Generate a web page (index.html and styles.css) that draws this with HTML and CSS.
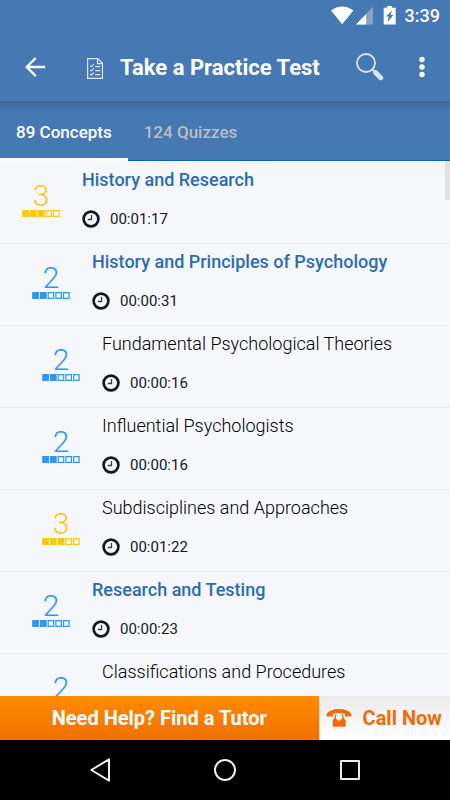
FILE: index.html
```html
<!DOCTYPE html>
<html lang="en">
<head>
<meta charset="utf-8">
<meta name="viewport" content="width=device-width, initial-scale=1">
<title>Take a Practice Test</title>
<link rel="stylesheet" href="styles.css">
</head>
<body>
<svg class="defs" aria-hidden="true">
  <symbol id="clock" viewBox="0 0 18 18">
    <circle cx="9" cy="9" r="7.4" fill="none" stroke="#15171c" stroke-width="2.7"/>
    <path d="M9.500 5V9.500H5.800" fill="none" stroke="#3a3c42" stroke-width="1.3"/>
  </symbol>
  <symbol id="bar3" viewBox="0 0 38 7">
    <path d="M.2 0h6.800v7H.2zM7.900 0h6.800v7H7.900zM15.600 0h6.800v7h-6.800z" fill="currentColor"/>
    <path d="M23.900.6h5.500v5.800h-5.500zM31.600.6h5.500v5.800h-5.500z" fill="none" stroke="currentColor" stroke-width="1.2"/>
  </symbol>
  <symbol id="bar2" viewBox="0 0 38 7">
    <path d="M.2 0h6.800v7H.2zM7.900 0h6.800v7H7.900z" fill="currentColor"/>
    <path d="M16.200.6h5.500v5.800h-5.500zM23.900.6h5.500v5.800h-5.500zM31.600.6h5.500v5.800h-5.500z" fill="none" stroke="currentColor" stroke-width="1.2"/>
  </symbol>
</svg>
<div class="screen">
  <div class="status">
    <svg width="66" height="20" viewBox="0 0 66 20" aria-hidden="true">
      <path d="M0 4.600Q11.300-3.600 22.400 4.600L11.200 18.300z" fill="#fff"/>
      <path d="M42 .8V18.500H25z" fill="#84a4cf"/>
      <path d="M35.200 8V18.500H25z" fill="#fff"/>
      <path d="M56 0h5v1.700h3.700V18.500H52.700V1.700H56z" fill="#fff"/>
      <path d="M61 4.500L55 10.500h2.700l-1.200 5.500 6-7h-2.900z" fill="#4678b3"/>
    </svg>
    <span class="time">3:39</span>
  </div>
  <header class="appbar">
    <button class="icon-button" aria-label="Back">
      <svg width="20" height="20" viewBox="0 0 20 20"><path d="M10.700 1L1.700 10l9 9M2 10h18" fill="none" stroke="#fff" stroke-width="2.400"/></svg>
    </button>
    <svg class="doc" width="16" height="21" viewBox="0 0 16 21" fill="none" stroke="#dfe7f1" aria-hidden="true">
      <path d="M.6.700h10.200l4.600 4.600v15H.6zM10.500.700v4.900h4.900" stroke-width="1.200"/>
      <path d="M3.200 7.600l1.200 1.200 2.400-2.600M3.200 11.800l1.200 1.200 2.400-2.600M3.200 16l1.200 1.200 2.400-2.600M8.200 8.600H13M8.200 12.600H13M8.200 16.600H13" stroke-width="1.100"/>
    </svg>
    <h1>Take a Practice Test</h1>
    <button class="icon-button" aria-label="Search">
      <svg width="28" height="28" viewBox="0 0 28 28"><circle cx="10" cy="10" r="9" fill="none" stroke="#dde5f1" stroke-width="1.800"/><path d="M16 16l3 3" stroke="#dde5f1" stroke-width="1.800"/><path d="M19.700 19.700l5 5" stroke="#dde5f1" stroke-width="5" stroke-linecap="round"/></svg>
    </button>
    <button class="icon-button more" aria-label="More options">
      <svg width="6" height="22" viewBox="0 0 6 22" fill="#fff"><circle cx="3" cy="3.500" r="2.700"/><circle cx="3" cy="11" r="2.700"/><circle cx="3" cy="18.500" r="2.700"/></svg>
    </button>
  </header>
  <nav class="tabs">
    <button class="tab active">89 Concepts</button>
    <button class="tab">124 Quizzes</button>
  </nav>
  <main class="list">
    <article class="row level1 gold">
      <div class="rating"><span>3</span><svg width="38" height="7"><use href="#bar3"/></svg></div>
      <div class="info"><h2>History and Research</h2><p><svg width="18" height="18"><use href="#clock"/></svg>00:01:17</p></div>
    </article>
    <article class="row level2">
      <div class="rating"><span>2</span><svg width="38" height="7"><use href="#bar2"/></svg></div>
      <div class="info"><h2>History and Principles of Psychology</h2><p><svg width="18" height="18"><use href="#clock"/></svg>00:00:31</p></div>
    </article>
    <article class="row level3">
      <div class="rating"><span>2</span><svg width="38" height="7"><use href="#bar2"/></svg></div>
      <div class="info"><h2>Fundamental Psychological Theories</h2><p><svg width="18" height="18"><use href="#clock"/></svg>00:00:16</p></div>
    </article>
    <article class="row level3">
      <div class="rating"><span>2</span><svg width="38" height="7"><use href="#bar2"/></svg></div>
      <div class="info"><h2>Influential Psychologists</h2><p><svg width="18" height="18"><use href="#clock"/></svg>00:00:16</p></div>
    </article>
    <article class="row level3 gold">
      <div class="rating"><span>3</span><svg width="38" height="7"><use href="#bar3"/></svg></div>
      <div class="info"><h2>Subdisciplines and Approaches</h2><p><svg width="18" height="18"><use href="#clock"/></svg>00:01:22</p></div>
    </article>
    <article class="row level2">
      <div class="rating"><span>2</span><svg width="38" height="7"><use href="#bar2"/></svg></div>
      <div class="info"><h2>Research and Testing</h2><p><svg width="18" height="18"><use href="#clock"/></svg>00:00:23</p></div>
    </article>
    <article class="row level3">
      <div class="rating"><span>2</span></div>
      <div class="info"><h2>Classifications and Procedures</h2></div>
    </article>
    <div class="scrollbar"></div>
  </main>
  <div class="help">
    <button class="tutor">Need Help? Find a Tutor</button>
    <button class="call">
      <svg width="26" height="18" viewBox="0 0 26 18" fill="#ee6b0b" aria-hidden="true">
        <path d="M.5 7.500Q0 3.300 5 1.500Q13-1.300 21 1.500Q26 3.300 25.500 7.500H19V5Q13 2.800 7 5V7.500z"/>
        <path d="M8.800 5.500h2v1h4.400v-1h2V8l2.500 3.500v6.300h-13v-6.300L8.800 8z"/><circle cx="13" cy="8.300" r="3.100" fill="#f8f8f8"/>
      </svg>
      Call Now
    </button>
  </div>
  <nav class="system">
    <button aria-label="Back"><svg width="24" height="26" viewBox="0 0 24 26"><path d="M21 2.300V23.700L3.300 13z" fill="none" stroke="#eee" stroke-width="2" stroke-linejoin="round"/></svg></button>
    <button aria-label="Home"><svg width="24" height="24" viewBox="0 0 24 24"><circle cx="12" cy="12" r="10" fill="none" stroke="#eee" stroke-width="2"/></svg></button>
    <button aria-label="Recent apps"><svg width="24" height="20" viewBox="0 0 24 20"><path d="M3 1h18v18H3z" fill="none" stroke="#eee" stroke-width="2" stroke-linejoin="round"/></svg></button>
  </nav>
</div>
</body>
</html>
```
FILE: styles.css
```css
* { box-sizing: border-box; }
body { margin: 0; font-family: Roboto, sans-serif; color: #15171c; }
button { border: 0; padding: 0; background: none; font: inherit; color: inherit; }
svg { display: block; flex: none; }
h1, h2, p { margin: 0; }
.defs { position: absolute; width: 0; height: 0; }
.screen { display: flex; flex-direction: column; height: 100vh; background: #f6f7fb; }

.status { display: flex; flex: none; align-items: center; justify-content: flex-end; gap: 8px; height: 32px; padding-right: 10px; background: #4678b3; color: #fff; }
.time { font-size: 18px; font-weight: 500; line-height: 32px; }

.appbar { display: flex; flex: none; align-items: center; height: 69px; padding: 0 25px; background: #4678b3; color: #fff; }
.icon-button { flex: none; }
.doc { margin: 4px 17px 0 42px; }
.appbar h1 { flex: 1; padding-top: 2px; font-size: 22px; font-weight: 700; line-height: 32px; white-space: nowrap; }
.more { margin-left: 35px; }

.tabs { display: flex; flex: none; height: 60px; background: linear-gradient(#3e6494, #4678b3 10px); border-bottom: 1px solid #0a66ae; color: #bbbcbf; font-size: 17px; font-weight: 500; }
.tab { height: 60px; padding: 4px 16px 0; border-bottom: 3px solid transparent; }
.tab.active { color: #fff; border-color: #fff; }

.list { position: relative; flex: 1; min-height: 0; padding-top: 1px; overflow: hidden; }
.row { display: flex; gap: 22px; height: 82px; padding-right: 16px; border-bottom: 1px solid #e9eaee; color: #2f96f0; }
.level1 { padding-left: 22px; }
.level2 { padding-left: 32px; }
.level3 { padding-left: 42px; }
.gold { color: #f6c910; }
.rating { flex: none; width: 38px; padding-top: 18px; text-align: center; }
.rating span { display: block; height: 30px; font-size: 30px; font-weight: 300; line-height: 32px; }
.info { padding-top: 6px; }
.info h2 { font-size: 18px; font-weight: 500; line-height: 24px; color: #2b6cb0; white-space: nowrap; }
.level3 .info h2 { font-weight: 300; color: #000; }
.info p { display: flex; align-items: center; gap: 10px; margin-top: 17px; font-size: 15px; line-height: 20px; color: #15171c; }
.scrollbar { position: absolute; top: 0; right: 0; width: 5px; height: 39px; background: #e2e2e4; }

.help { display: flex; flex: none; height: 44px; font-size: 20px; font-weight: 700; }
.tutor { flex: 1; background: linear-gradient(#ff8c00, #f07000); color: #fff; }
.call { display: flex; align-items: center; gap: 11px; padding: 0 8px 0 6px; border-left: 1px solid #ffd9cb; background: linear-gradient(#ebebeb, #fff); color: #ee6b0b; }

.system { display: flex; flex: none; align-items: center; justify-content: center; gap: 101px; height: 60px; background: #000; }
```
